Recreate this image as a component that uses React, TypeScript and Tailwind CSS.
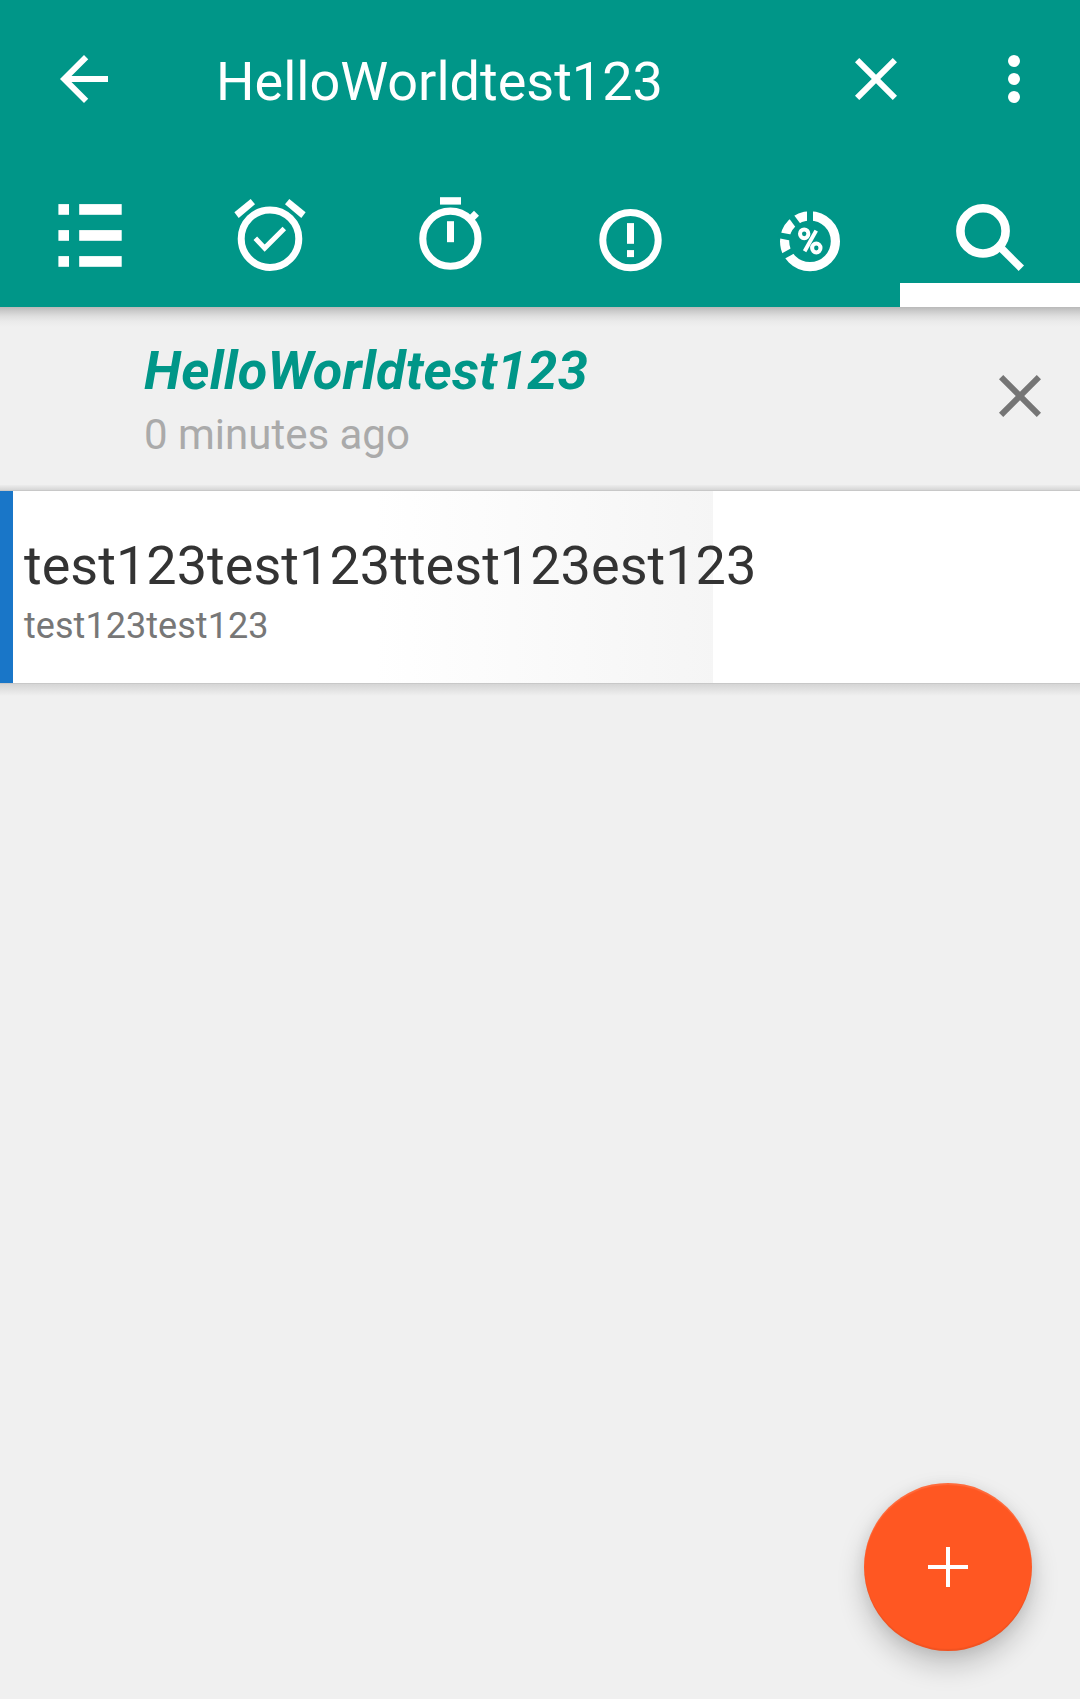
import type { ReactNode } from "react";

function TabIcon({ children }: { children: ReactNode }) {
  return (
    <svg width="80" height="80" viewBox="0 0 80 80" fill="#fff" stroke="none">
      {children}
    </svg>
  );
}

function ListIcon() {
  return (
    <TabIcon>
      {[7.1, 33.1, 59.1].map((y) => (
        <g key={y}>
          <rect x="8.4" y={y} width="10.6" height="10.7" />
          <rect x="29.2" y={y} width="42.5" height="10.7" />
        </g>
      ))}
    </TabIcon>
  );
}

function AlarmIcon() {
  return (
    <TabIcon>
      <circle cx="40" cy="41.7" r="28.8" fill="none" stroke="#fff" strokeWidth="7" />
      <polygon points="4.4,15.2 20.7,2 25,7.3 8.7,21" />
      <polygon points="75.6,15.2 59.3,2 55,7.3 71.3,21" />
      <polyline points="25.3,41.2 34.7,51.1 54.3,31.6" fill="none" stroke="#fff" strokeWidth="5" />
    </TabIcon>
  );
}

function TimerIcon() {
  return (
    <TabIcon>
      <circle cx="40.4" cy="41.7" r="27.6" fill="none" stroke="#fff" strokeWidth="7.1" />
      <rect x="37" y="24.2" width="7" height="21" />
      <rect x="30" y="0.2" width="21" height="7.4" />
      <line x1="66.5" y1="16.3" x2="60" y2="22.8" stroke="#fff" strokeWidth="7" />
    </TabIcon>
  );
}

function AlertIcon() {
  return (
    <TabIcon>
      <circle cx="40.5" cy="43.1" r="27.7" fill="none" stroke="#fff" strokeWidth="7" />
      <rect x="37" y="26.1" width="7" height="20.7" />
      <rect x="37" y="53.1" width="7" height="7" />
    </TabIcon>
  );
}

function ProgressIcon() {
  return (
    <TabIcon>
      <circle cx="40" cy="44.3" r="25.4" fill="none" stroke="#fff" strokeWidth="9.2" />
      {[0, -37, -79, -119].map((angle) => (
        <rect
          key={angle}
          x="37"
          y="12"
          width="6"
          height="14"
          fill="#009688"
          transform={`rotate(${angle} 40 44.3)`}
        />
      ))}
      <g fill="none" stroke="#fff">
        <ellipse cx="34.2" cy="36.8" rx="4.2" ry="4.4" strokeWidth="4" />
        <ellipse cx="46.3" cy="51" rx="4.2" ry="4.4" strokeWidth="4" />
        <line x1="46.2" y1="33.6" x2="34.6" y2="54.2" strokeWidth="3.9" />
      </g>
    </TabIcon>
  );
}

function SearchIcon() {
  return (
    <TabIcon>
      <circle cx="33" cy="33.9" r="22.6" fill="none" stroke="#fff" strokeWidth="8.6" />
      <line x1="51" y1="51" x2="71.3" y2="71.3" stroke="#fff" strokeWidth="7.6" />
    </TabIcon>
  );
}

function CloseIcon() {
  return (
    <svg width="72" height="72" viewBox="0 0 24 24" fill="currentColor">
      <path d="M19 6.41L17.59 5 12 10.59 6.41 5 5 6.41 10.59 12 5 17.59 6.41 19 12 13.41 17.59 19 19 17.59 13.41 12z" />
    </svg>
  );
}

const tabs = [
  { name: "Lists", icon: <ListIcon /> },
  { name: "Due", icon: <AlarmIcon /> },
  { name: "Starts", icon: <TimerIcon /> },
  { name: "Priority", icon: <AlertIcon /> },
  { name: "Progress", icon: <ProgressIcon /> },
  { name: "Search", icon: <SearchIcon />, active: true },
];

export default function App() {
  return (
    <div className="relative flex h-[1699px] w-[1080px] flex-col overflow-hidden bg-[#f0f0f0] font-['Roboto',sans-serif]">
      <header className="relative flex h-[307px] shrink-0 flex-col bg-[#009688] text-white">
        <div className="flex h-[158px] items-center pr-[30px] pl-12">
          <button aria-label="Back">
            <svg width="72" height="72" viewBox="0 0 24 24" fill="currentColor">
              <path d="M20 11H7.83l5.59-5.59L12 4l-8 8 8 8 1.41-1.41L7.83 13H20v-2z" />
            </svg>
          </button>
          <div className="ml-24 flex-1 pt-1.5 text-[54px] leading-[64px]">HelloWorldtest123</div>
          <button aria-label="Clear">
            <CloseIcon />
          </button>
          <button aria-label="More" className="ml-[66px]">
            <svg width="72" height="72" viewBox="0 0 24 24" fill="currentColor">
              <circle cx="12" cy="6" r="2" />
              <circle cx="12" cy="12" r="2" />
              <circle cx="12" cy="18" r="2" />
            </svg>
          </button>
        </div>
        <nav className="grid h-[149px] grid-cols-6">
          {tabs.map((tab) => (
            <button
              key={tab.name}
              aria-label={tab.name}
              className={`flex justify-center pt-[39px] ${tab.active ? "border-b-[24px] border-white" : ""}`}
            >
              {tab.icon}
            </button>
          ))}
        </nav>
        <div className="absolute top-full left-0 h-5 w-full bg-[linear-gradient(to_bottom,#b9b9b9_0px,#cbcbcb_4px,#dedede_9px,#eaeaea_14px,#f0f0f0_20px)]" />
      </header>

      <section className="flex h-[178px] shrink-0 items-start pr-6 pl-36">
        <div className="flex-1 pt-8">
          <div className="text-[54px] leading-[64px] font-bold tracking-[0.2px] text-[#009688] italic">
            HelloWorldtest123
          </div>
          <div className="mt-[7px] text-[42px] leading-[50px] text-[#aaaaaa]">0 minutes ago</div>
        </div>
        <button aria-label="Remove" className="mt-[53px] text-[#757575]">
          <CloseIcon />
        </button>
      </section>

      <div className="h-[5px] shrink-0 bg-linear-to-b from-[#ececec] to-[#d6d6d6]" />
      <article className="flex h-[194px] shrink-0 border-y border-[#c8c8c8] bg-white">
        <div className="w-[713px] border-l-[13px] border-[#1976c8] bg-[linear-gradient(to_right,#fff_362px,#f5f5f5_705px)] pt-[43px] pl-[11px] whitespace-nowrap">
          <div className="text-[54px] leading-[64px] tracking-[0.03px] text-[#333333]">
            test123test123ttest123est123
          </div>
          <div className="mt-[7px] text-[36px] leading-[42px] tracking-[0.05px] text-[#777777]">test123test123</div>
        </div>
      </article>
      <div className="h-3 shrink-0 bg-linear-to-b from-[#d5d5d5] to-[#f0f0f0]" />

      <button
        aria-label="Add task"
        className="absolute right-12 bottom-12 flex size-[168px] items-center justify-center rounded-full bg-[#ff5722] shadow-[0_14px_28px_rgba(0,0,0,0.2),0_2px_14px_rgba(0,0,0,0.07),inset_0_2px_1px_rgba(255,255,255,0.12),inset_0_-2px_1px_rgba(0,0,0,0.06)]"
      >
        <svg width="40" height="40" viewBox="0 0 40 40" fill="#fff">
          <rect x="18" y="0" width="4" height="40" />
          <rect x="0" y="18" width="40" height="4" />
        </svg>
      </button>
    </div>
  );
}
